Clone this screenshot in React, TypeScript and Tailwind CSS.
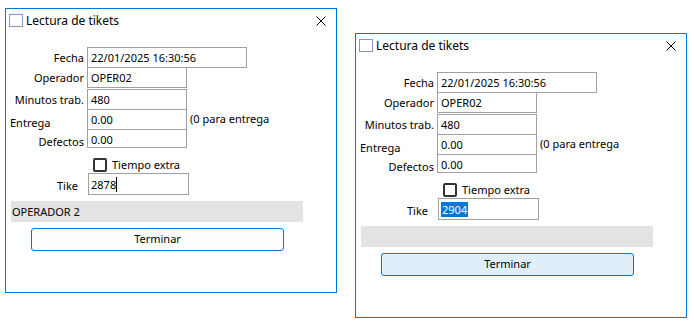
import React from "react";

type WinProps = {
  tike: string;
  selected?: boolean;
  operator?: string;
  hoverButton?: boolean;
};

function CloseIcon() {
  return (
    <svg viewBox="0 0 10 10" className="h-[10px] w-[10px]" aria-hidden>
      <path d="M0.5 0.5L9.5 9.5M9.5 0.5L0.5 9.5" stroke="#000" strokeWidth={1} fill="none" />
    </svg>
  );
}

function Field({ value, width, className = "" }: { value: string; width: string; className?: string }) {
  return (
    <div
      className={`border border-[#a0a0a0] bg-white pl-[3px] text-[11px] leading-[19px] text-black ${width} ${className}`}
    >
      {value}
    </div>
  );
}

function LecturaWindow({ tike, selected, operator = "", hoverButton }: WinProps) {
  return (
    <div className="flex h-[285px] w-[332px] flex-col border border-[#0078d7] bg-white text-black">
      {/* title bar */}
      <div className="flex h-[23px] items-center pl-[3px] pr-[10px]">
        <div className="h-[13px] w-[14px] border border-[#8797bd] bg-white" />
        <span className="ml-[3px] text-[12px]">Lectura de tikets</span>
        <div className="ml-auto">
          <CloseIcon />
        </div>
      </div>

      <div className="mt-[15px] flex flex-col text-[11px]">
        <div className="flex h-[21px]">
          <div className="w-[78px] text-right leading-[21px]">Fecha</div>
          <Field value="22/01/2025 16:30:56" width="w-[160px]" className="ml-[3px] h-[21px]" />
        </div>
        <div className="-mt-px flex h-[21px]">
          <div className="w-[78px] text-right leading-[21px]">Operador</div>
          <Field value="OPER02" width="w-[100px]" className="ml-[3px] h-[21px]" />
        </div>
        <div className="mt-[1px] flex h-[21px]">
          <div className="w-[78px] text-right leading-[21px]">Minutos trab.</div>
          <Field value="480" width="w-[100px]" className="ml-[3px] h-[21px]" />
        </div>
        <div className="-mt-px flex h-[21px]">
          <div className="h-[21px] w-[78px] pl-[4px] leading-[27px]">Entrega</div>
          <Field value="0.00" width="w-[100px]" className="ml-[3px] h-[21px]" />
          <div className="ml-[3px] leading-[19px]">(0 para entrega</div>
        </div>
        <div className="-mt-px flex h-[19px]">
          <div className="h-[19px] w-[78px] text-right leading-[25px]">Defectos</div>
          <Field value="0.00" width="w-[100px]" className="ml-[3px] h-[19px] leading-[17px]" />
        </div>

        <div className="mt-[9px] flex h-[16px] items-center pl-[87px]">
          <div className="h-[14px] w-[14px] rounded-[2px] border-2 border-[#333]" />
          <span className="ml-[5px]">Tiempo extra</span>
        </div>

        <div className="flex h-[22px]">
          <div className="h-[22px] w-[72px] text-right leading-[26px]">Tike</div>
          <div className="ml-[10px] flex h-[22px] w-[101px] items-center border border-[#a0a0a0] pl-[2px]">
            {selected ? (
              <span className="bg-[#0078d7] px-[1px] leading-[15px] text-white">{tike}</span>
            ) : (
              <>
                <span className="leading-[15px]">{tike}</span>
                <span className="h-[15px] w-px bg-black" />
              </>
            )}
          </div>
        </div>

        <div className="ml-[5px] mt-[6px] h-[21px] w-[292px] bg-[#e3e3e3] pl-px leading-[21px]">
          {operator}
        </div>

        <button
          type="button"
          className={`ml-[25px] mt-[6px] h-[23px] w-[253px] rounded-[3px] border border-[#0078d7] text-[11px] ${
            hoverButton ? "bg-[#e0eef9]" : "bg-[#fdfdfd]"
          }`}
        >
          Terminar
        </button>
      </div>
    </div>
  );
}

export default function App() {
  return (
    <div
      className="flex h-[327px] w-[694px] items-start bg-white pl-[5px] pt-[8px]"
      style={{ fontFamily: '"Noto Sans", "Liberation Sans", sans-serif' }}
    >
      <LecturaWindow tike="2878" operator="OPERADOR 2" />
      <div className="ml-[18px] mt-[25px]">
        <LecturaWindow tike="2904" selected hoverButton />
      </div>
    </div>
  );
}
